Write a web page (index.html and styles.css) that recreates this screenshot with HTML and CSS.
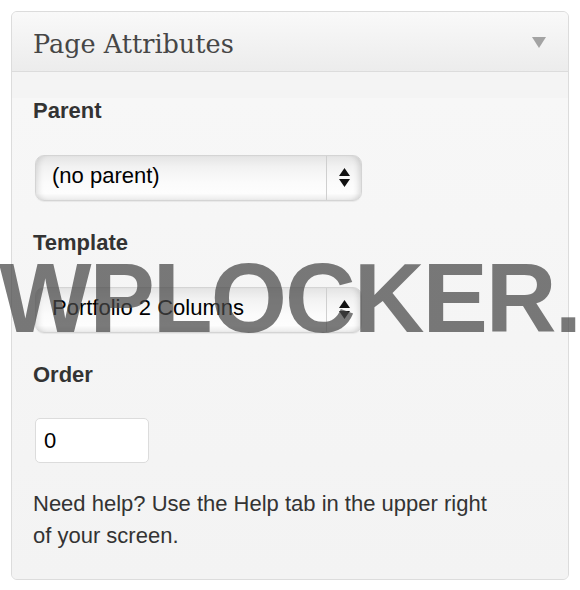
FILE: index.html
```html
<!DOCTYPE html>
<html>
<head>
<meta charset="utf-8">
<link rel="stylesheet" href="styles.css">
</head>
<body>
<div class="panel">
  <div class="panel-head">
    <h3 class="panel-title">Page Attributes</h3>
    <svg class="toggle" width="14" height="11" viewBox="0 0 14 11"><path d="M0 0H14L7 11Z" fill="#a3a3a3"/></svg>
  </div>
  <div class="panel-body">
    <div class="label label-first">Parent</div>
    <div class="select">
      <span class="select-value">(no parent)</span>
      <span class="select-arrows">
        <svg width="11" height="19" viewBox="0 0 11 19"><path d="M5.5 0L11 8H0Z M0 11H11L5.5 19Z" fill="#111"/></svg>
      </span>
    </div>
    <div class="label">Template</div>
    <div class="select">
      <span class="select-value">Portfolio 2 Columns</span>
      <span class="select-arrows">
        <svg width="11" height="19" viewBox="0 0 11 19"><path d="M5.5 0L11 8H0Z M0 11H11L5.5 19Z" fill="#111"/></svg>
      </span>
    </div>
    <div class="label">Order</div>
    <div class="input">0</div>
    <p class="help">Need help? Use the Help tab in the upper right of your screen.</p>
  </div>
</div>
<div class="watermark">WPLOCKER.</div>
</body>
</html>
```
FILE: styles.css
```css
html, body {
  margin: 0;
  padding: 0;
  background: #ffffff;
}
body {
  position: relative;
  width: 580px;
  height: 590px;
  overflow: hidden;
  font-family: "Liberation Sans", Arial, sans-serif;
}
.panel {
  margin: 11px 11px 0 11px;
  border: 1px solid #dcdcdc;
  border-radius: 6px;
  background: #f4f4f4;
  overflow: hidden;
}
.panel-head {
  display: flex;
  align-items: center;
  justify-content: space-between;
  padding: 17px 22px 12px 21px;
  background: linear-gradient(to bottom, #f9f9f9, #ececec);
  border-bottom: 1px solid #dcdcdc;
}
.panel-title {
  margin: 0;
  font-family: "DejaVu Serif", Georgia, serif;
  font-weight: normal;
  font-size: 25.5px;
  line-height: 30px;
  color: #464646;
}
.toggle {
  display: block;
  margin-top: -3px;
}
.panel-body {
  padding: 0 22px 27px 21px;
  background: linear-gradient(to bottom, #f7f7f7, #f3f3f3);
}
.label {
  margin-top: 29px;
  font-size: 22px;
  line-height: 26px;
  font-weight: bold;
  color: #333333;
}
.label-first {
  margin-top: 26px;
}
.select {
  display: flex;
  align-items: stretch;
  box-sizing: border-box;
  width: 327px;
  height: 46px;
  margin: 31px 0 0 2px;
  border: 1px solid #d4d4d4;
  border-radius: 9px;
  background: linear-gradient(to bottom, #e4e4e4 0%, #f2f2f2 25%, #fbfbfb 60%, #fdfdfd 85%, #ebebeb 100%);
  box-shadow: inset 7px 0 6px -5px rgba(0,0,0,0.13), inset -7px 0 6px -5px rgba(0,0,0,0.15), 0 1px 1px rgba(0,0,0,0.06);
}
.select-value {
  flex: 1;
  display: flex;
  align-items: center;
  padding: 0 0 4px 16px;
  font-size: 22px;
  color: #000000;
  border-right: 1px solid #cfcfcf;
}
.select-arrows {
  width: 34px;
  display: flex;
  align-items: center;
  justify-content: center;
  padding-bottom: 1px;
}
.select-arrows svg {
  display: block;
}
.input {
  box-sizing: border-box;
  width: 114px;
  height: 45px;
  margin: 30px 0 0 2px;
  padding: 0 8px;
  display: flex;
  align-items: center;
  background: #ffffff;
  border: 1px solid #dcdcdc;
  border-radius: 5px;
  font-size: 22px;
  color: #000000;
}
.help {
  margin: 25px 0 0 0;
  max-width: 470px;
  font-size: 22px;
  line-height: 32px;
  color: #333333;
}
.watermark {
  position: absolute;
  left: -1px;
  top: 249px;
  font-family: "Liberation Sans", Arial, sans-serif;
  font-weight: bold;
  font-size: 98px;
  line-height: 98px;
  letter-spacing: -2px;
  color: rgba(70, 70, 70, 0.72);
  white-space: nowrap;
}
```
